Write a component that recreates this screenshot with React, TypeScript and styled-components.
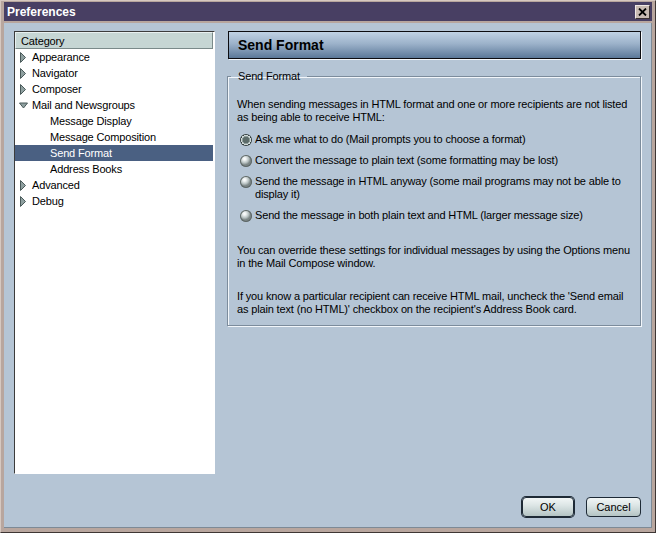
import React from "react";
import styled, { createGlobalStyle } from "styled-components";

const Global = createGlobalStyle`
  html, body { margin: 0; padding: 0; background: #b5c5d5; }
  body { font-family: "Liberation Sans", Arial, sans-serif; font-size: 11px; color: #000; letter-spacing: -0.15px; }
  * { box-sizing: border-box; }
`;

const Window = styled.div`
  width: 656px;
  height: 533px;
  display: flex;
  flex-direction: column;
  background: #b8a69e;
  border-top: 1px solid #d6c8c0;
  border-left: 1px solid #d6c8c0;
  border-right: 1px solid #3e3634;
  border-bottom: 1px solid #3e3634;
  padding: 1px 3px 4px 3px;
`;

const TitleBar = styled.div`
  height: 19px;
  background: #483f63;
  display: flex;
  align-items: center;
  justify-content: space-between;
  padding: 0 2px 0 3px;
  margin-bottom: 2px;
`;

const Title = styled.span`
  color: #fff;
  font-weight: bold;
  font-size: 12px;
  letter-spacing: 0;
`;

const CloseButton = styled.div`
  width: 15px;
  height: 14px;
  background: #c8bab2;
  border-top: 1px solid #f0e8e4;
  border-left: 1px solid #f0e8e4;
  border-right: 1px solid #3a3030;
  border-bottom: 1px solid #3a3030;
  display: flex;
  align-items: center;
  justify-content: center;
`;

const Body = styled.div`
  flex: 1;
  background: #b5c5d5;
  display: flex;
  flex-direction: column;
  padding: 8px 11px 10px 10px;
  box-shadow: inset -1px -1px 0 #7d8a96;
`;

const MainRow = styled.div`
  display: flex;
  gap: 12px;
  height: 443px;
`;

const Tree = styled.div`
  flex: none;
  width: 201px;
  height: 100%;
  background: #fff;
  border-top: 1px solid #3c3c3c;
  border-left: 1px solid #3c3c3c;
  border-right: 1px solid #fff;
  border-bottom: 1px solid #fff;
  display: flex;
  flex-direction: column;
`;

const TreeHeader = styled.div`
  height: 17px;
  background: #c6d6d4;
  border: 1px solid #7a8a8a;
  border-left-color: #e8f0f0;
  border-top-color: #e8f0f0;
  margin-right: 1px;
  padding-left: 5px;
  display: flex;
  align-items: center;
`;

const TreeRow = styled.div<{ $level: number; $selected?: boolean }>`
  height: 16px;
  display: flex;
  align-items: center;
  padding-left: ${(p) => (p.$level === 0 ? 4 : 35)}px;
  margin-right: 1px;
  background: ${(p) => (p.$selected ? "#4a6082" : "transparent")};
  color: ${(p) => (p.$selected ? "#fff" : "#000")};
  white-space: nowrap;
`;

const Twisty = styled.svg`
  width: 9px;
  height: 11px;
  margin-right: 4px;
  flex: none;
`;

const Panel = styled.div`
  flex: 1;
  min-width: 0;
  display: flex;
  flex-direction: column;
`;

const PanelHeader = styled.div`
  height: 28px;
  margin-left: 1px;
  border: 1px solid #0c0c10;
  box-shadow: 1px 1px 0 #f4f8fc;
  background: linear-gradient(#c0d2e4 0%, #9cb2ca 45%, #5b7898 100%);
  display: flex;
  align-items: center;
  padding-left: 9px;
  font-size: 14px;
  font-weight: bold;
  letter-spacing: 0;
`;

const Group = styled.fieldset`
  margin: 11px 0 0 0;
  padding: 15px 4px 9px 9px;
  border: 1px solid #7c8c9c;
  box-shadow: inset 1px 1px 0 #f2f6fa, 1px 1px 0 #f2f6fa;
  min-width: 0;
`;

const Legend = styled.legend`
  padding: 0 7px;
  margin-left: -6px;
  line-height: 13px;
`;

const Para = styled.p<{ $top?: number }>`
  margin: ${(p) => p.$top ?? 0}px 0 0 0;
  line-height: 13px;
  white-space: nowrap;
`;

const RadioList = styled.div`
  display: flex;
  flex-direction: column;
  gap: 8px;
  margin-top: 9px;
  padding-left: 3px;
`;

const RadioItem = styled.div`
  display: flex;
  align-items: center;
  line-height: 13px;
  white-space: nowrap;
`;

const RadioDot = styled.span<{ $checked?: boolean }>`
  width: 12px;
  height: 12px;
  border-radius: 50%;
  flex: none;
  margin-right: 3px;
  align-self: flex-start;
  margin-top: 0.5px;
  background: ${(p) =>
    p.$checked
      ? "radial-gradient(circle at 50% 50%, #5c6c6a 0 3px, #8e9e9c 3px 4px, #cfd8d8 4px 5px, #34403f 5px)"
      : "radial-gradient(circle at 38% 32%, #ffffff 0, #eef2f2 1.5px, #b8c2c2 4px, #7c8686 6px)"};
  box-shadow: ${(p) => (p.$checked ? "none" : "inset 0 0 0 1px #5e6868")};
`;

const ButtonRow = styled.div`
  margin-top: auto;
  display: flex;
  justify-content: flex-end;
  gap: 11px;
  padding-bottom: 1px;
`;

const Button = styled.button<{ $default?: boolean }>`
  width: ${(p) => (p.$default ? 52 : 55)}px;
  height: 20px;
  font-family: "Liberation Sans", Arial, sans-serif;
  font-size: 11px;
  color: #000;
  border-radius: 4px;
  border: 1px solid #1e2a36;
  background: linear-gradient(#f2f6f6 0%, #dde6e6 40%, #b4c4c4 100%);
  box-shadow: ${(p) => (p.$default ? "0 0 0 1px #1e2a36" : "none")};
  margin-right: ${(p) => (p.$default ? 1 : 0)}px;
  padding: 0;
`;

const Arrow = ({ open }: { open?: boolean }) => (
  <Twisty viewBox="0 0 9 11">
    {open ? (
      <polygon points="0.5,3 8.5,3 4.5,8" fill="#8fa0a0" stroke="#4a5a5a" strokeWidth="1" />
    ) : (
      <polygon points="1.5,0.5 6.5,5.5 1.5,10.5" fill="#8fa0a0" stroke="#4a5a5a" strokeWidth="1" />
    )}
  </Twisty>
);

const tree = [
  { label: "Appearance", level: 0 },
  { label: "Navigator", level: 0 },
  { label: "Composer", level: 0 },
  { label: "Mail and Newsgroups", level: 0, open: true },
  { label: "Message Display", level: 1 },
  { label: "Message Composition", level: 1 },
  { label: "Send Format", level: 1, selected: true },
  { label: "Address Books", level: 1 },
  { label: "Advanced", level: 0 },
  { label: "Debug", level: 0 },
];

export default function App() {
  return (
    <>
      <Global />
      <Window>
        <TitleBar>
          <Title>Preferences</Title>
          <CloseButton>
            <svg width="9" height="8" viewBox="0 0 9 8">
              <path d="M1 0.5 L8 7.5 M8 0.5 L1 7.5" stroke="#000" strokeWidth="1.8" />
            </svg>
          </CloseButton>
        </TitleBar>
        <Body>
          <MainRow>
            <Tree>
              <TreeHeader>Category</TreeHeader>
              {tree.map((t) => (
                <TreeRow key={t.label} $level={t.level} $selected={t.selected}>
                  {t.level === 0 && <Arrow open={t.open} />}
                  {t.label}
                </TreeRow>
              ))}
            </Tree>
            <Panel>
              <PanelHeader>Send Format</PanelHeader>
              <Group>
                <Legend>Send Format</Legend>
                <Para>
                  When sending messages in HTML format and one or more recipients are not listed
                  <br />
                  as being able to receive HTML:
                </Para>
                <RadioList>
                  <RadioItem>
                    <RadioDot $checked />
                    Ask me what to do (Mail prompts you to choose a format)
                  </RadioItem>
                  <RadioItem>
                    <RadioDot />
                    Convert the message to plain text (some formatting may be lost)
                  </RadioItem>
                  <RadioItem>
                    <RadioDot />
                    <span>
                      Send the message in HTML anyway (some mail programs may not be able to
                      <br />
                      display it)
                    </span>
                  </RadioItem>
                  <RadioItem>
                    <RadioDot />
                    Send the message in both plain text and HTML (larger message size)
                  </RadioItem>
                </RadioList>
                <Para $top={22}>
                  You can override these settings for individual messages by using the Options menu
                  <br />
                  in the Mail Compose window.
                </Para>
                <Para $top={20}>
                  If you know a particular recipient can receive HTML mail, uncheck the 'Send email
                  <br />
                  as plain text (no HTML)' checkbox on the recipient's Address Book card.
                </Para>
              </Group>
            </Panel>
          </MainRow>
          <ButtonRow>
            <Button $default>OK</Button>
            <Button>Cancel</Button>
          </ButtonRow>
        </Body>
      </Window>
    </>
  );
}
